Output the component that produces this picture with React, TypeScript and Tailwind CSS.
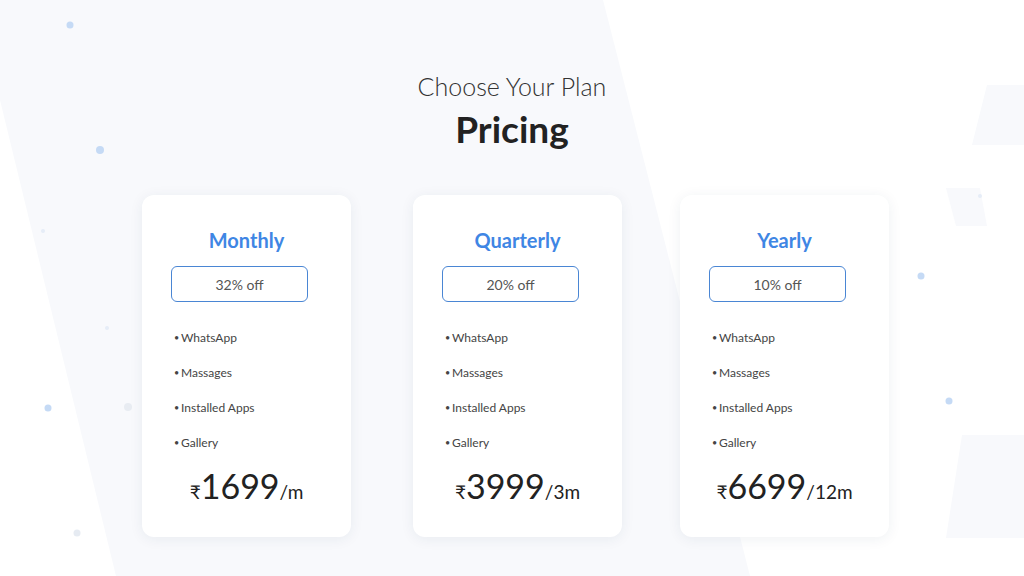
import React from "react";

const plans = [
  { name: "Monthly", off: "32% off", price: "1699", per: "/m", ml: "ml-0" },
  { name: "Quarterly", off: "20% off", price: "3999", per: "/3m", ml: "ml-[62px]" },
  { name: "Yearly", off: "10% off", price: "6699", per: "/12m", ml: "ml-[58px]" },
];

const features = ["WhatsApp", "Massages", "Installed Apps", "Gallery"];

const dots: [number, number, number, string][] = [
  [70, 25, 7, "#c5daf5"],
  [100, 150, 8, "#c5daf5"],
  [43, 231, 4, "#e6edf7"],
  [107, 328, 4, "#e6edf7"],
  [48, 408, 7, "#c5daf5"],
  [128, 407, 8, "#e8ecf2"],
  [77, 533, 7, "#e6ebf2"],
  [921, 276, 7, "#c5daf5"],
  [949, 401, 7, "#c5daf5"],
  [980, 196, 4, "#e6edf7"],
];

function Card({ p }: { p: (typeof plans)[number] }) {
  return (
    <div
      className={`${p.ml} w-[209px] h-[342px] bg-white rounded-[12px] shadow-[0_2px_14px_rgba(30,50,90,0.07)] flex flex-col items-center pt-[31px]`}
    >
      <div className="text-[20px] leading-[28px] font-bold text-[#3f86e4]">{p.name}</div>
      <div className="self-start ml-[29px] mt-[12px] w-[137px] h-[36px] border border-[#4a86d4] rounded-[6px] flex items-center justify-center text-[14px] text-[#555]">
        {p.off}
      </div>
      <div className="self-start pl-[32px] mt-[27px] flex flex-col gap-[17px]">
        {features.map((f) => (
          <div key={f} className="flex items-center text-[12px] leading-[18px] text-[#444]">
            <span className="w-[7px] text-[9px]">•</span>
            <span>{f}</span>
          </div>
        ))}
      </div>
      <div className="mt-[14px] flex items-baseline text-[#222]">
        <span className="text-[19px]">₹</span>
        <span className="text-[34px] leading-[40px]">{p.price}</span>
        <span className="text-[19px]">{p.per}</span>
      </div>
    </div>
  );
}

export default function App() {
  return (
    <div
      className="relative w-[1024px] h-[576px] overflow-hidden bg-white"
      style={{ fontFamily: "Lato, 'Open Sans', sans-serif" }}
    >
      <svg className="absolute inset-0" width="1024" height="576" viewBox="0 0 1024 576">
        <polygon points="0,0 603,0 750,576 116,576 0,100" fill="#f8f9fc" />
        <polygon points="987,85 1024,85 1024,145 972,145" fill="#f8f9fc" />
        <polygon points="946,188 980,188 987,226 956,226" fill="#f8f9fc" />
        <polygon points="962,435 1024,435 1024,538 946,538" fill="#f8f9fc" />
        {dots.map(([x, y, s, c], i) => (
          <circle key={i} cx={x} cy={y} r={s / 2} fill={c} />
        ))}
      </svg>
      <div className="relative flex flex-col items-center">
        <div className="mt-[71px] text-[25px] leading-[30px] font-light text-[#333]">Choose Your Plan</div>
        <div className="mt-[6px] text-[37px] leading-[44px] font-bold text-[#222]">Pricing</div>
        <div className="mt-[44px] self-start ml-[142px] flex">
          {plans.map((p) => (
            <Card key={p.name} p={p} />
          ))}
        </div>
      </div>
    </div>
  );
}
